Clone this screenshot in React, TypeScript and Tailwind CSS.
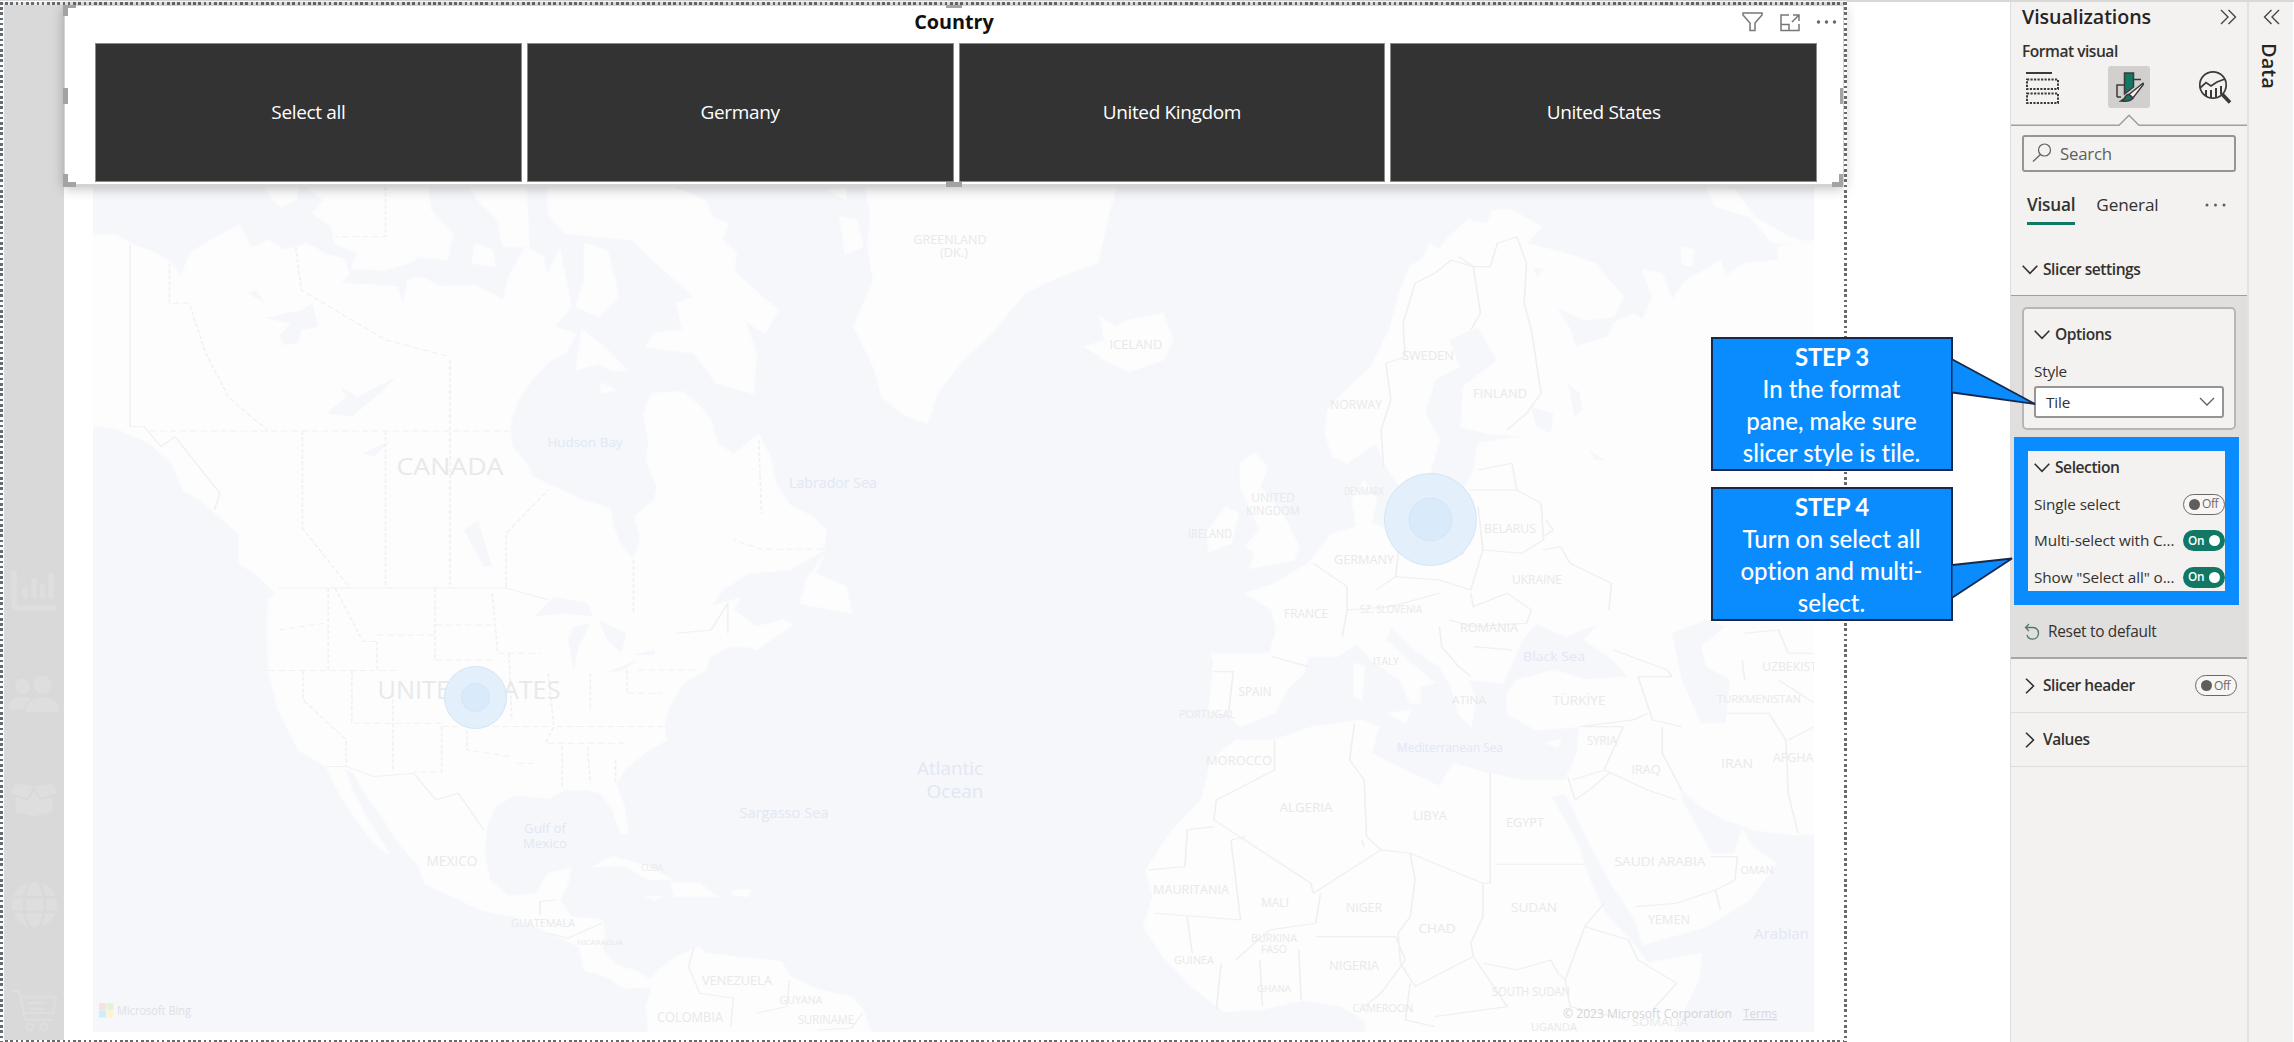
import React from "react";
import { FaBoxOpen, FaGlobe } from "react-icons/fa";
import { IoPeople } from "react-icons/io5";

type Label = [text: string, x: number, y: number, width: number, size: number];

const landLabels: Label[] = [
  ["CANADA", 450, 466, 107, 24],
  ["UNITED STATES", 469, 690, 183, 25],
  ["MEXICO", 452, 861, 51, 14],
  ["CUBA", 652, 868, 22, 9],
  ["GUATEMALA", 543, 923, 64, 10],
  ["NICARAGUA", 600, 942, 46, 8],
  ["VENEZUELA", 737, 980, 70, 13],
  ["COLOMBIA", 690, 1017, 66, 14],
  ["GUYANA", 801, 1000, 43, 11],
  ["SURINAME", 826, 1020, 56, 12],
  ["GREENLAND", 950, 239, 73, 13],
  ["(DK.)", 954, 253, 28, 12],
  ["ICELAND", 1136, 344, 53, 13],
  ["SWEDEN", 1428, 355, 52, 13],
  ["FINLAND", 1500, 393, 54, 13],
  ["NORWAY", 1356, 404, 52, 13],
  ["UNITED", 1273, 498, 44, 12],
  ["KINGDOM", 1273, 511, 54, 12],
  ["IRELAND", 1210, 534, 44, 12],
  ["DENMARK", 1364, 491, 40, 11],
  ["BELARUS", 1510, 528, 52, 13],
  ["GERMANY", 1364, 559, 60, 13],
  ["POLAND", 1440, 551, 50, 12],
  ["UKRAINE", 1537, 580, 50, 12],
  ["FRANCE", 1306, 614, 44, 12],
  ["SZ.  SLOVENIA", 1391, 609, 62, 10],
  ["ROMANIA", 1489, 628, 58, 12],
  ["ITALY", 1386, 661, 26, 11],
  ["SPAIN", 1255, 692, 33, 12],
  ["PORTUGAL", 1207, 714, 56, 10],
  ["UZBEKISTAN", 1798, 667, 72, 12],
  ["TURKMENISTAN", 1759, 699, 84, 11],
  ["TÜRKİYE", 1579, 700, 53, 13],
  ["ATINA", 1469, 700, 34, 11],
  ["SYRIA", 1602, 741, 30, 12],
  ["IRAQ", 1646, 769, 29, 13],
  ["IRAN", 1737, 763, 32, 13],
  ["AFGHANISTAN", 1815, 758, 84, 12],
  ["MOROCCO", 1239, 761, 66, 12],
  ["ALGERIA", 1306, 807, 53, 13],
  ["LIBYA", 1430, 816, 34, 12],
  ["EGYPT", 1525, 822, 38, 13],
  ["SAUDI ARABIA", 1660, 861, 91, 13],
  ["OMAN", 1757, 870, 33, 11],
  ["MAURITANIA", 1191, 889, 76, 13],
  ["MALI", 1275, 902, 28, 13],
  ["NIGER", 1364, 907, 36, 13],
  ["CHAD", 1437, 928, 37, 13],
  ["SUDAN", 1534, 907, 46, 13],
  ["YEMEN", 1669, 919, 42, 13],
  ["NIGERIA", 1354, 965, 50, 13],
  ["BURKINA", 1274, 938, 46, 10],
  ["FASO", 1274, 949, 26, 10],
  ["GUINEA", 1194, 960, 40, 10],
  ["GHANA", 1274, 989, 34, 9],
  ["CAMEROON", 1383, 1008, 61, 11],
  ["SOUTH SUDAN", 1531, 992, 78, 12],
  ["SOMALIA", 1660, 1022, 56, 11],
  ["UGANDA", 1554, 1027, 46, 11],
];

const seaLabels: Label[] = [
  ["Hudson Bay", 585, 442, 75, 13],
  ["Labrador Sea", 833, 483, 88, 14],
  ["Sargasso Sea", 784, 813, 89, 14],
  ["Gulf of", 545, 828, 42, 13],
  ["Mexico", 545, 843, 44, 13],
  ["Atlantic", 950, 769, 66, 18],
  ["Ocean", 955, 792, 57, 18],
  ["Black Sea", 1554, 656, 62, 13],
  ["Mediterranean Sea", 1450, 747, 106, 13],
  ["Arabian Sea", 1796, 934, 84, 14],
];

function MapLabels({ items, fill }: { items: Label[]; fill: string }) {
  return (
    <g fill={fill} textAnchor="middle">
      {items.map(([text, x, y, width, size]) => (
        <text key={text + x} x={x} y={y + size * 0.36} fontSize={size} textLength={width} lengthAdjust="spacingAndGlyphs">
          {text}
        </text>
      ))}
    </g>
  );
}

function WorldMap() {
  return (
    <svg
      className="block h-[845px] w-[1721px] font-['Open_Sans','Noto_Sans',sans-serif]"
      viewBox="93 187 1721 845"
      preserveAspectRatio="none"
    >
      <rect x="93" y="187" width="1721" height="845" fill="#f5f7fb" />
      {/* Americas and Greenland */}
      <g transform="matrix(0.5612 0 0 0.3333 60 180)" strokeLinejoin="round">
        <g fill="#fdfdfd" stroke="#fbfcfd" strokeWidth="4">
          <path d="M59 165L100 165L130 195L165 215L195 245L215 290L235 215L270 180L320 135L340 205L370 180L400 210L440 190L475 225L505 235L515 280L500 310L560 315L600 320L612 380L620 300L640 290L680 320L740 315L790 360L800 290L830 200L860 230L868 290L890 210L905 330L910 380L880 440L920 460L900 520L870 545L845 590L815 660L800 740L805 800L835 860L840 890L880 920L930 960L980 985L985 1040L1000 1100L1022 1140L1035 1080L1025 1010L1060 960L1065 920L1045 840L1050 790L1040 700L1055 640L1110 635L1140 680L1160 720L1170 790L1200 825L1225 790L1245 765L1265 830L1275 910L1300 975L1340 1010L1365 1050L1360 1110L1300 1170L1225 1180L1180 1230L1160 1280L1210 1255L1200 1290L1240 1340L1290 1320L1305 1335L1240 1410L1225 1400L1190 1400L1155 1435L1150 1470L1110 1510L1085 1580L1075 1640L1080 1680L1040 1720L1005 1770L990 1810L1005 1880L1012 1960L1000 1960L985 1890L965 1840L940 1830L900 1830L870 1855L810 1845L775 1880L760 1940L755 2020L765 2100L800 2150L850 2140L870 2080L910 2065L905 2110L890 2160L910 2210L965 2220L970 2260L965 2310L990 2355L1030 2375L1050 2400L1075 2360L1100 2330L1140 2300L1150 2320L1200 2330L1285 2345L1300 2390L1350 2430L1410 2450L1430 2490L1445 2560L1050 2560L1045 2480L1055 2420L1005 2425L975 2390L935 2370L925 2300L880 2265L810 2210L750 2190L700 2150L650 2110L640 2060L600 1980L570 1900L540 1830L525 1780L505 1760L520 1830L545 1910L585 2020L560 1990L520 1900L495 1830L475 1760L425 1710L390 1590L372 1470L370 1330L372 1260L385 1240L355 1190L320 1150L320 1060L290 1020L250 960L220 930L200 850L160 790L100 745L59 738Z" />
          <path d="M440 20L655 20L660 90L700 160L690 240L640 230L620 250L580 270L520 265L530 220L490 190L485 140L450 100L470 60Z" />
          <path d="M365 20L425 20L420 60L395 80L380 60ZM730 20L830 20L835 200L790 200L780 120L745 60ZM740 190L770 210L775 260L735 250Z" />
          <path d="M870 20L1090 20L1150 60L1160 110L1190 130L1180 180L1205 220L1200 270L1250 350L1280 390L1255 460L1220 420L1240 520L1235 640L1170 610L1130 520L1045 500L1060 460L1110 450L1100 370L1130 350L1070 260L1020 180L900 160L870 100Z" />
          <path d="M935 190L975 210L995 350L960 410L920 380L935 300ZM930 450L970 500L1010 570L985 575L960 550L920 570ZM965 610L990 630L965 640Z" />
          <path d="M1435 20L1882 20L1870 90L1848 250L1780 290L1718 340L1666 447L1600 558L1561 645L1545 730L1500 700L1465 650L1450 560L1415 440L1430 380L1450 300L1440 200L1445 100ZM1390 110L1420 120L1430 200L1400 220ZM1370 30L1400 20L1400 60Z" />
          <path d="M1360 1130L1345 1180L1400 1220L1410 1300L1320 1270L1330 1200ZM950 2060L985 2030L1050 2060L1090 2100L1050 2100L1010 2060ZM1090 2110L1140 2110L1170 2150L1095 2150ZM1200 2130L1230 2130L1225 2150L1200 2145ZM1045 2150L1070 2150L1060 2160Z" />
        </g>
        <path
          fill="#f5f7fb"
          d="M365 415L430 390L450 370L460 440L430 450L425 490L400 495L390 470L410 430ZM475 700L510 650L500 620L530 650L600 590L570 640L520 710ZM720 1050L745 1020L770 1160L755 1160ZM845 1310L880 1250L940 1270L950 1310L900 1300ZM905 1380L915 1340L945 1330L925 1400L915 1470ZM960 1320L1010 1360L1000 1420L975 1380ZM975 1475L1030 1440L1000 1475ZM1020 1425L1060 1410L1060 1425ZM335 340L350 330L365 370ZM540 820L590 780L560 830Z"
        />
        <g fill="none" stroke="#f1f1f2" strokeWidth="3">
          <path d="M125 195V740L150 740L180 800L205 770L285 940L275 990M388 1224H795L870 1260M475 1760L510 1760L560 1790L630 1780L670 1860L710 1840L755 1950M855 2205L855 2165L885 2160M870 2260L905 2275L965 2230M1130 2300L1120 2360L1140 2440L1200 2455L1195 2540M1300 2400L1295 2480L1240 2500M1430 2500L1410 2545L1350 2550M1100 1360L1160 1350L1190 1270L1190 1360" />
          <g strokeDasharray="12 6">
            <path d="M160 753H800M432 753V1045L515 1220M580 753V1215M580 20V170H490M695 540V1215M795 1220V1060L870 930M195 250V370H230L260 520L300 650L340 710L370 750M420 200L430 330L580 480L695 530M1022 1140V1300M1245 780L1250 1000M1360 1108H1250L1200 1080" />
            <path d="M372 1472H560M478 1224V1470M565 1385V1472H600M520 1472V1630H680M433 1472V1560L510 1680V1760M593 1540V1770M565 1365H668M668 1224V1440H770M668 1335H770M490 1224L540 1385H565M680 1640V1776H630M680 1640H870M725 1650V1710L805 1730M770 1240L780 1420H855M800 1420L805 1620M870 1480L880 1640L865 1690H1010M885 1640H1075M815 1750H850M895 1700V1820M940 1700L945 1810M990 1740V1810M1010 1470V1540H1075M1030 1470H1140M945 1480V1590M390 1350L470 1330" />
          </g>
        </g>
      </g>
      {/* Europe, Africa and western Asia */}
      <g transform="matrix(0.4847 0 0 0.3333 1100 180)" strokeLinejoin="round">
        <g fill="#fdfdfd" stroke="#fbfcfd" strokeWidth="4">
          <path d="M480 830L465 760L470 690L500 640L560 560L600 440L620 330L640 260L670 230L680 190L700 210L720 170L760 120L800 130L810 90L850 90L910 140L880 190L960 220L1020 250L1080 350L1060 410L1000 420L940 380L970 450L980 500L1050 470L1060 430L1100 400L1120 420L1140 350L1120 270L1160 280L1180 360L1210 300L1260 260L1280 240L1290 290L1330 250L1400 240L1400 200L1480 180V1965L1430 1965L1350 1950L1290 1920L1240 1880L1195 1820L1200 1860L1230 1940L1260 2020L1310 2020L1325 1950L1345 2000L1395 2050L1340 2160L1250 2240L1120 2295L1105 2220L1050 2100L1000 1960L975 1880L960 1840L930 1850L985 1990L1010 2100L1040 2200L1100 2290L1130 2350L1240 2320L1235 2400L1180 2560L550 2560L545 2520L500 2480L420 2460L330 2490L255 2495L190 2420L130 2330L90 2240L110 2150L95 2070L150 1950L210 1860L230 1740L280 1680L360 1680L440 1640L540 1620L575 1640L560 1720L600 1750L700 1820L730 1750L800 1780L870 1800L960 1800L985 1720L990 1640L900 1650L840 1600L840 1540L860 1500L940 1470L1000 1500L1090 1490L1060 1440L1000 1380L1030 1330L960 1370L900 1330L870 1380L850 1450L830 1510L760 1500L775 1560L765 1640L740 1600L725 1520L700 1460L650 1410L600 1340L590 1380L650 1460L690 1510L660 1520L660 1570L640 1570L620 1500L560 1440L530 1390L490 1430L430 1430L420 1480L385 1530L360 1600L290 1640L260 1600L225 1590L235 1450L230 1420L350 1420L365 1350L355 1290L300 1240L360 1210L430 1150L480 1060L530 1040L520 960L545 900L570 960L560 1030L620 1060L760 1020L750 930L770 880L780 790L870 770L800 760L745 740L750 620L820 540L780 440L720 480L740 560L690 600L670 700L700 780L680 880L620 920L590 860L570 790L510 850Z" />
          <path d="M320 820L345 860L330 920L380 1010L410 1100L400 1140L310 1165L320 1120L300 1100L330 1050L290 920L290 850ZM220 1060L260 980L285 1000L270 1090L225 1115ZM0 410L30 440L60 420L130 400L150 480L130 540L60 575L10 540L-30 500L10 480ZM1250 20L1310 30L1350 110L1420 170L1474 190L1390 190L1340 110L1270 80ZM1200 200L1225 210L1220 260L1200 250ZM595 1600L640 1590L630 1630ZM525 1450L545 1460L540 1560L525 1550ZM920 1690L950 1680L945 1700Z" />
        </g>
        <path
          fill="#f5f7fb"
          d="M1180 1360L1250 1320L1290 1340L1240 1400L1250 1460L1300 1500L1290 1630L1240 1630L1200 1500ZM890 680L935 700L930 760L900 740ZM965 610L990 640L995 690L980 710ZM1010 810L1040 840L1020 840ZM895 260L915 270L900 290Z"
        />
        <g fill="none" stroke="#f0f0f1" strokeWidth="3.5">
          <path d="M585 860L580 750L600 660L590 550L630 530L625 430L650 310L690 280L725 240L770 260L785 400L765 450M740 230L770 260L805 260L820 190L860 170L880 250L875 370L890 450L910 640L880 700L840 750M780 870L850 850L860 930L760 930M860 930L910 970L915 1080L870 1120L790 1110L780 980M920 1020L935 1050L915 1070M790 1110L765 1230L700 1200L610 1190L570 1230M620 1060L610 1190M915 1110L950 1100L970 1150L1055 1210L1050 1290M765 1240L770 1280L840 1240L890 1290L880 1330L770 1340L720 1320M440 1150L510 1220L510 1290L500 1370M510 1290L600 1280L700 1240M355 1430L430 1460M235 1475L275 1475L265 1600M700 1340L705 1400L740 1460L765 1490M770 1400L850 1410M1060 1410L1170 1470L1180 1490L1110 1490L1140 1620L1200 1640M990 1640L1100 1620L1130 1600M1000 1640L1080 1640L1040 1770L975 1800M1040 1770L1130 1830L1190 1860M1160 1640L1160 1720L1200 1830M1050 1780L1010 1830L980 1860L965 1790" />
          <path d="M360 1680L360 1770L240 1860L235 1920L435 2110L440 2140L580 2010L640 2020L790 2110M235 1940L180 1950L175 2060L100 2070M270 1980L290 2220L110 2200M270 1980L300 1970M580 2010L550 1970L545 1800L515 1740L525 1630M805 1780V2110L790 2110V2210L765 2290L770 2330L650 2420L620 2350L615 2260L640 2210L650 2100L640 2020M815 2053H1000M455 2140L445 2230L350 2250L280 2340M445 2270L610 2270L630 2340L580 2440L545 2480M640 2410L630 2520L690 2540M770 2330L840 2480L690 2510M790 2350L860 2370L930 2340L945 2380L960 2400L1000 2240L1040 2170M1000 2240L1090 2280L1110 2340L1190 2410L1140 2490M960 2400L970 2480L1090 2520M1105 2180L1190 2170L1270 2130L1310 2100L1315 2030L1260 2030M1270 2130L1280 2190M410 2310L415 2460M330 2340L335 2480M250 2350L240 2490M180 2210L190 2320M1325 1440L1330 1500M1330 1360L1400 1350L1420 1420L1474 1420M1290 1600L1380 1600L1415 1680L1420 1840L1440 1960M1420 1680L1474 1640M1400 1500L1474 1570M540 1980L545 2000" />
        </g>
      </g>
      <MapLabels items={landLabels} fill="#e8e9ea" />
      <MapLabels items={seaLabels} fill="#e1e7f3" />
      {/* Data bubbles */}
      <g fill="#e3f0fc" stroke="#d3e5f7">
        <circle cx="475.500" cy="697.500" r="31" />
        <circle cx="475.500" cy="697.500" r="14" fill="#d9ebfb" />
        <circle cx="1430.500" cy="519.500" r="46" />
        <circle cx="1430.500" cy="519.500" r="21.500" fill="#d9ebfb" />
      </g>
      {/* Attribution */}
      <rect x="99" y="1003" width="7" height="7" fill="#fde0d8" />
      <rect x="106.500" y="1003" width="7" height="7" fill="#e3f3d8" />
      <rect x="99" y="1010.500" width="7" height="7" fill="#cfeefc" />
      <rect x="106.500" y="1010.500" width="7" height="7" fill="#fef2cf" />
      <g fontSize="13">
        <text x="117" y="1015" fill="#dfe0e3" textLength="74" lengthAdjust="spacingAndGlyphs">Microsoft Bing</text>
        <text x="1563" y="1018" fill="#d4d4d6" textLength="169" lengthAdjust="spacingAndGlyphs">© 2023 Microsoft Corporation</text>
        <text x="1743" y="1018" fill="#d3d8e2" textLength="34" lengthAdjust="spacingAndGlyphs" textDecoration="underline">Terms</text>
      </g>
    </svg>
  );
}

function ChartIcon() {
  return (
    <svg className="h-[41px] w-[46px]" viewBox="0 0 46 41" fill="none" stroke="currentColor" strokeLinecap="round">
      <path d="M3 3V34Q3 38 7 38H43" strokeWidth="5.500" />
      <path d="M14 20V26M23 11V26M31.500 16V26M40 5V26" strokeWidth="5.500" />
    </svg>
  );
}

function CartIcon() {
  return (
    <svg className="h-[43px] w-[47px]" viewBox="0 0 47 43" fill="none" stroke="currentColor" strokeWidth="2.500" strokeLinecap="round" strokeLinejoin="round">
      <path d="M1.500 2H5Q8 2 9 5L14 31H41M10 8H45L42 24H13M18 14H35M18 20H34" />
      <circle cx="19" cy="38" r="3.200" />
      <circle cx="33" cy="38" r="3.200" />
    </svg>
  );
}

function Sidebar() {
  return (
    <aside className="flex w-[60px] shrink-0 flex-col items-center border-x border-[#cfdde8] bg-[#d9d9d9] pt-[565px] text-[#dedede]">
      <ChartIcon />
      <IoPeople className="mt-[56px] size-[54px]" />
      <FaBoxOpen className="mt-[56px] size-[46px]" />
      <FaGlobe className="mt-[58px] size-[47px]" />
      <div className="mt-[61px]">
        <CartIcon />
      </div>
    </aside>
  );
}

const countries = ["Select all", "Germany", "United Kingdom", "United States"];

function Slicer() {
  return (
    <section className="relative z-10 flex h-[180px] flex-col border border-[#d4d4d4] bg-white pl-[30px] pr-[26px] shadow-[0_3px_12px_rgba(0,0,0,0.28)]">
      <div className="flex h-[37px] shrink-0 items-center justify-center pb-[6px] pr-[4px] text-[19.8px] font-bold text-[#111]">
        Country
      </div>
      <div className="grid h-[139px] grid-cols-4 gap-[5px]">
        {countries.map((c) => (
          <div key={c} className="flex items-center justify-center border border-[#8b8b8b] bg-[#333333] text-[19px] tracking-[-0.35px] text-white">
            {c}
          </div>
        ))}
      </div>
      <svg className="absolute left-[1677px] top-[5px] h-[24px] w-[96px]" viewBox="0 0 96 24" fill="none" stroke="#777" strokeWidth="1.500">
        <path d="M1 2H20V4L13 12V19.500H8V12L1 4Z" />
        <path d="M47 4H39V19.500H57V13M39 13.500H47V19.500M50 11L56.500 4.500M51 4H57V10" />
        <g fill="#666" stroke="none">
          <circle cx="76.500" cy="11" r="1.700" />
          <circle cx="84.500" cy="11" r="1.700" />
          <circle cx="92.500" cy="11" r="1.700" />
        </g>
      </svg>
      <div className="absolute -left-[2px] -top-[1px] h-[11px] w-[13px] border-l-[5px] border-t-[3px] border-[#a3a3a3]" />
      <div className="absolute -bottom-[3px] -left-[2px] h-[13px] w-[13px] border-b-[5px] border-l-[5px] border-[#a3a3a3]" />
      <div className="absolute -bottom-[3px] right-0 h-[13px] w-[11px] border-b-[5px] border-r-[4px] border-[#a3a3a3]" />
      <div className="absolute -left-[2px] top-[82px] h-[16px] w-[5px] bg-[#a3a3a3]" />
      <div className="absolute right-0 top-[82px] h-[16px] w-[3px] bg-[#a3a3a3]" />
      <div className="absolute -bottom-[3px] left-[881px] h-[5px] w-[16px] bg-[#a3a3a3]" />
      <div className="absolute -top-[1px] left-[881px] h-[3px] w-[16px] bg-[#a3a3a3]" />
    </section>
  );
}

function Chevron({ dir = "down", className = "" }: { dir?: "down" | "right"; className?: string }) {
  return (
    <svg className={"h-4 w-4 shrink-0 " + className} viewBox="0 0 16 16" fill="none" stroke="currentColor" strokeWidth="1.600">
      <path d={dir === "down" ? "M0.700 3.800L8 11.300L15.300 3.800" : "M4 0.700L11.500 8L4 15.300"} />
    </svg>
  );
}

function Toggle({ on }: { on: boolean }) {
  return on ? (
    <span className="flex h-[21px] w-[42px] shrink-0 items-center justify-between rounded-full bg-[#117865] pl-[5px] pr-[5px] text-[11.8px] font-semibold tracking-[-0.4px] text-white">
      On
      <span className="size-[11px] rounded-full bg-white" />
    </span>
  ) : (
    <span className="flex h-[21px] w-[42px] shrink-0 items-center gap-[2px] rounded-full border-[1.5px] border-[#6a6866] bg-[#f7f6f5] pl-[5px] text-[12px] tracking-[-0.4px] text-[#6b6967]">
      <span className="size-[11px] shrink-0 rounded-full bg-[#605e5c]" />
      Off
    </span>
  );
}

const selectionRows = [
  { label: "Single select", on: false },
  { label: "Multi-select with C...", on: true },
  { label: 'Show "Select all" o...', on: true },
];

function PaneIcons() {
  return (
    <div className="flex h-[42px] items-center justify-between pl-[4px] pr-[5px]">
      <svg className="h-[34px] w-[34px]" viewBox="0 0 34 34" fill="none" stroke="#3b3a39" strokeWidth="2">
        <path d="M0 3H26" />
        <path d="M1 9.500H32V19H1ZM1 23.500H32V33H1Z" strokeDasharray="2.200 1.300" />
      </svg>
      <div className="flex size-[42px] items-center justify-center rounded-[3px] bg-[#d2d0ce]">
        <svg className="h-[32px] w-[32px]" viewBox="0 0 32 32" fill="none" stroke="#3b3a39" strokeWidth="1.500">
          <path d="M4 26V14H11M21 8.500H28M4 26H8" />
          <path d="M11.500 2H20.500V16L11.500 23Z" fill="#117865" />
          <path d="M29.500 12.500Q31 11.500 30 14L20 27L16 23.500Z" fill="#f3f2f1" />
          <path d="M16 23.500L20 27Q18 31 8 30Q12 28 12.500 25.500Q14 23 16 23.500Z" fill="#117865" />
        </svg>
      </div>
      <svg className="h-[34px] w-[34px]" viewBox="0 0 34 34" fill="none" stroke="#3b3a39" strokeWidth="1.700">
        <circle cx="15" cy="15" r="13.200" />
        <path d="M2 18L8 12.500L13 16L19 12L27 9" />
        <path d="M8 26V20M13 28V20M18 28V18M23 24.500V16" strokeWidth="2" />
        <path d="M24 24L32 32.500" strokeWidth="3.600" />
      </svg>
    </div>
  );
}

function VisualizationsPane() {
  return (
    <div className="flex w-[237px] shrink-0 flex-col border-l border-[#dedcda] bg-[#f3f2f1] text-[#323130]">
      <div className="flex h-[123px] flex-col pl-[11px] pr-[10px]">
        <div className="flex h-[32px] items-center justify-between">
          <span className="pb-[2px] text-[19.7px] font-semibold tracking-[-0.1px] text-[#252423]">Visualizations</span>
          <svg className="mb-[2px] h-[16px] w-[17px]" viewBox="0 0 17 16" fill="none" stroke="#484644" strokeWidth="1.400">
            <path d="M1 1L8 8L1 15M8.500 1L15.500 8L8.500 15" />
          </svg>
        </div>
        <div className="flex h-[32px] items-center pt-[3px] text-[15.6px] font-semibold tracking-[-0.5px]">Format visual</div>
        <PaneIcons />
      </div>
      <svg className="-mt-[11px] block h-[12px] w-[236px] shrink-0" viewBox="0 0 236 12" fill="#f3f2f1" stroke="#a19f9d" strokeWidth="1.500">
        <path d="M0 11.200H108L118 1.200L128 11.200H236" />
      </svg>
      <div className="mx-[11px] mt-[9px] flex h-[37px] shrink-0 items-center rounded-[3px] border-2 border-[#979593] pl-[8px] text-[16.8px] tracking-[-0.2px] text-[#605e5c]">
        <svg className="mb-[2px] mr-[8px] h-[20px] w-[20px]" viewBox="0 0 20 20" fill="none" stroke="#605e5c" strokeWidth="1.200">
          <circle cx="12.500" cy="7" r="6" />
          <path d="M8.500 11.500L1 18.500" />
        </svg>
        Search
      </div>
      <div className="flex h-[53px] items-end pl-[16px]">
        <div className="border-b-[3px] border-[#117865] pb-[3px] text-[17.2px] font-semibold leading-[29px] tracking-[-0.2px]">Visual</div>
        <div className="ml-[21px] pb-[6px] text-[17.2px] leading-[29px] tracking-[-0.15px]">General</div>
        <svg className="mb-[18px] ml-auto mr-[21px] h-[4px] w-[21px]" viewBox="0 0 21 4" fill="#605e5c">
          <circle cx="2" cy="2" r="1.500" />
          <circle cx="10.500" cy="2" r="1.500" />
          <circle cx="19" cy="2" r="1.500" />
        </svg>
      </div>
      <div className="flex h-[71px] items-center border-b-[1.5px] border-[#a19f9d] pl-[11px] pt-[20px] text-[15.6px] font-semibold tracking-[-0.45px]">
        <Chevron className="mr-[5px]" />
        Slicer settings
      </div>
      <div className="flex h-[363px] shrink-0 flex-col border-b-2 border-[#a9a7a5] bg-[#e1dfdd]">
        <div className="mx-[11px] mt-[11px] h-[123px] rounded-[5px] border-2 border-[#b8b6b4] bg-[#f3f2f1] px-[10px]">
          <div className="mt-[14px] flex h-[24px] items-center text-[15.6px] font-semibold tracking-[-0.45px]">
            <Chevron className="mr-[5px]" />
            Options
          </div>
          <div className="mt-[12px] h-[24px] text-[15.3px] leading-[24px] tracking-[-0.2px]">Style</div>
          <div className="mt-[3px] flex h-[32px] items-center justify-between rounded-[3px] border-2 border-[#979593] bg-white pl-[10px] pr-[7px] text-[15.3px] tracking-[-0.1px]">
            Tile
            <svg className="h-4 w-4" viewBox="0 0 16 16" fill="none" stroke="#605e5c" strokeWidth="1.300">
              <path d="M1 4L8 11L15 4" />
            </svg>
          </div>
        </div>
        <div className="ml-[3px] mt-[7px] h-[168px] w-[225px] shrink-0 border-[14px] border-[#0a8cff] bg-[#f3f2f1] pl-[6px]">
          <div className="mt-[5px] flex h-[24px] items-center text-[15.6px] font-semibold tracking-[-0.45px]">
            <Chevron className="mr-[5px]" />
            Selection
          </div>
          <div className="mt-[6px] flex flex-col">
            {selectionRows.map((r) => (
              <div key={r.label} className="flex h-[36.500px] items-center justify-between whitespace-nowrap text-[15.3px] tracking-[-0.1px]">
                {r.label}
                <Toggle on={r.on} />
              </div>
            ))}
          </div>
        </div>
        <div className="flex flex-1 items-center pl-[13px] pt-[2px] text-[15.4px] tracking-[-0.28px]">
          <svg className="mr-[8px] h-[18px] w-[16px]" viewBox="0 0 16 18" fill="none" stroke="#4f7a70" strokeWidth="1.300">
            <path d="M5 1L1.500 4.500L5 8M1.500 4.500H9Q14.500 5 14.500 10.500Q14 16 8.500 16.200Q4 16 3 12" />
          </svg>
          Reset to default
        </div>
      </div>
      <div className="flex h-[54px] shrink-0 items-center border-b-[1.5px] border-[#dfdddb] pl-[11px] pr-[10px] text-[15.5px] font-semibold tracking-[-0.45px]">
        <Chevron dir="right" className="mr-[5px]" />
        Slicer header
        <span className="ml-auto font-normal">
          <Toggle on={false} />
        </span>
      </div>
      <div className="flex h-[54px] shrink-0 items-center border-b-[1.5px] border-[#dfdddb] pl-[11px] text-[15.5px] font-semibold tracking-[-0.45px]">
        <Chevron dir="right" className="mr-[5px]" />
        Values
      </div>
    </div>
  );
}

function DataPane() {
  return (
    <div className="mr-px flex flex-1 flex-col items-center border-l-2 border-[#e4e2e0] bg-[#f3f2f1] pt-[7px]">
      <svg className="h-[16px] w-[17px]" viewBox="0 0 17 16" fill="none" stroke="#484644" strokeWidth="1.400">
        <path d="M16 1L9 8L16 15M8.500 1L1.500 8L8.500 15" />
      </svg>
      <div className="mr-[5px] mt-[18px] text-[20px] font-semibold leading-[26px] text-[#252423] [writing-mode:vertical-rl]">Data</div>
    </div>
  );
}

function Callout({ title, lines, top, points }: { title: string; lines: string[]; top: string; points: string }) {
  return (
    <div className={"absolute left-[1711px] z-20 h-[134px] w-[242px] border-2 border-[#16294d] bg-[#0a8cff] text-center font-['Lato','Open_Sans',sans-serif] text-[24px] leading-[32px] text-white [font-variant-ligatures:none] " + top}>
      <div className="pt-[2px] font-bold tracking-[-0.2px]">{title}</div>
      {lines.map((l) => (
        <div key={l} className="whitespace-nowrap pr-[1px] font-medium">{l}</div>
      ))}
      <svg className="absolute left-[237px] top-0 h-[130px] w-[90px]" viewBox="0 0 90 130" fill="#0a8cff" stroke="#16294d" strokeWidth="1.800">
        <polyline points={points} />
      </svg>
    </div>
  );
}

export default function App() {
  return (
    <div className="relative flex h-[1042px] w-[2294px] overflow-hidden bg-white font-['Open_Sans','Noto_Sans',sans-serif]">
      <main className="relative h-[1042px] w-[1847px] shrink-0 border-t border-[#d8d8d8] pl-[4px] pr-[3px] pt-[4px]">
        <div className="flex h-[1037px]">
          <Sidebar />
          <div className="flex flex-1 flex-col">
            <Slicer />
            <div className="pl-[29px] pt-[2px]">
              <WorldMap />
            </div>
          </div>
        </div>
        <div className="absolute left-0 top-[1px] h-[3px] w-[1847px] bg-[repeating-linear-gradient(90deg,#6a6a6a_0_2.6px,#e8e8e8_2.6px_5.22px)]" />
        <div className="absolute bottom-0 left-0 h-[2px] w-[1847px] bg-[repeating-linear-gradient(90deg,#6a6a6a_0_2.6px,#ffffff_2.6px_5.22px)]" />
        <div className="absolute left-0 top-[1px] h-[1040px] w-[3px] bg-[repeating-linear-gradient(180deg,#6a6a6a_0_2.6px,#ffffff_2.6px_5.22px)]" />
        <div className="absolute right-0 top-[1px] z-10 h-[1040px] w-[3px] bg-[repeating-linear-gradient(180deg,#6a6a6a_0_2.6px,#ffffff_2.6px_5.22px)]" />
      </main>
      <div className="flex flex-1 border-t-2 border-[#d8d8d8] pl-[163px]">
        <VisualizationsPane />
        <DataPane />
      </div>
      <Callout
        title="STEP 3"
        lines={["In the format", "pane, make sure", "slicer style is tile."]}
        top="top-[337px]"
        points="2.500,20.500 85,65 2.500,53.500"
      />
      <Callout
        title="STEP 4"
        lines={["Turn on select all", "option and multi-", "select."]}
        top="top-[487px]"
        points="2.500,76 62,69.500 2.500,108.500"
      />
    </div>
  );
}
